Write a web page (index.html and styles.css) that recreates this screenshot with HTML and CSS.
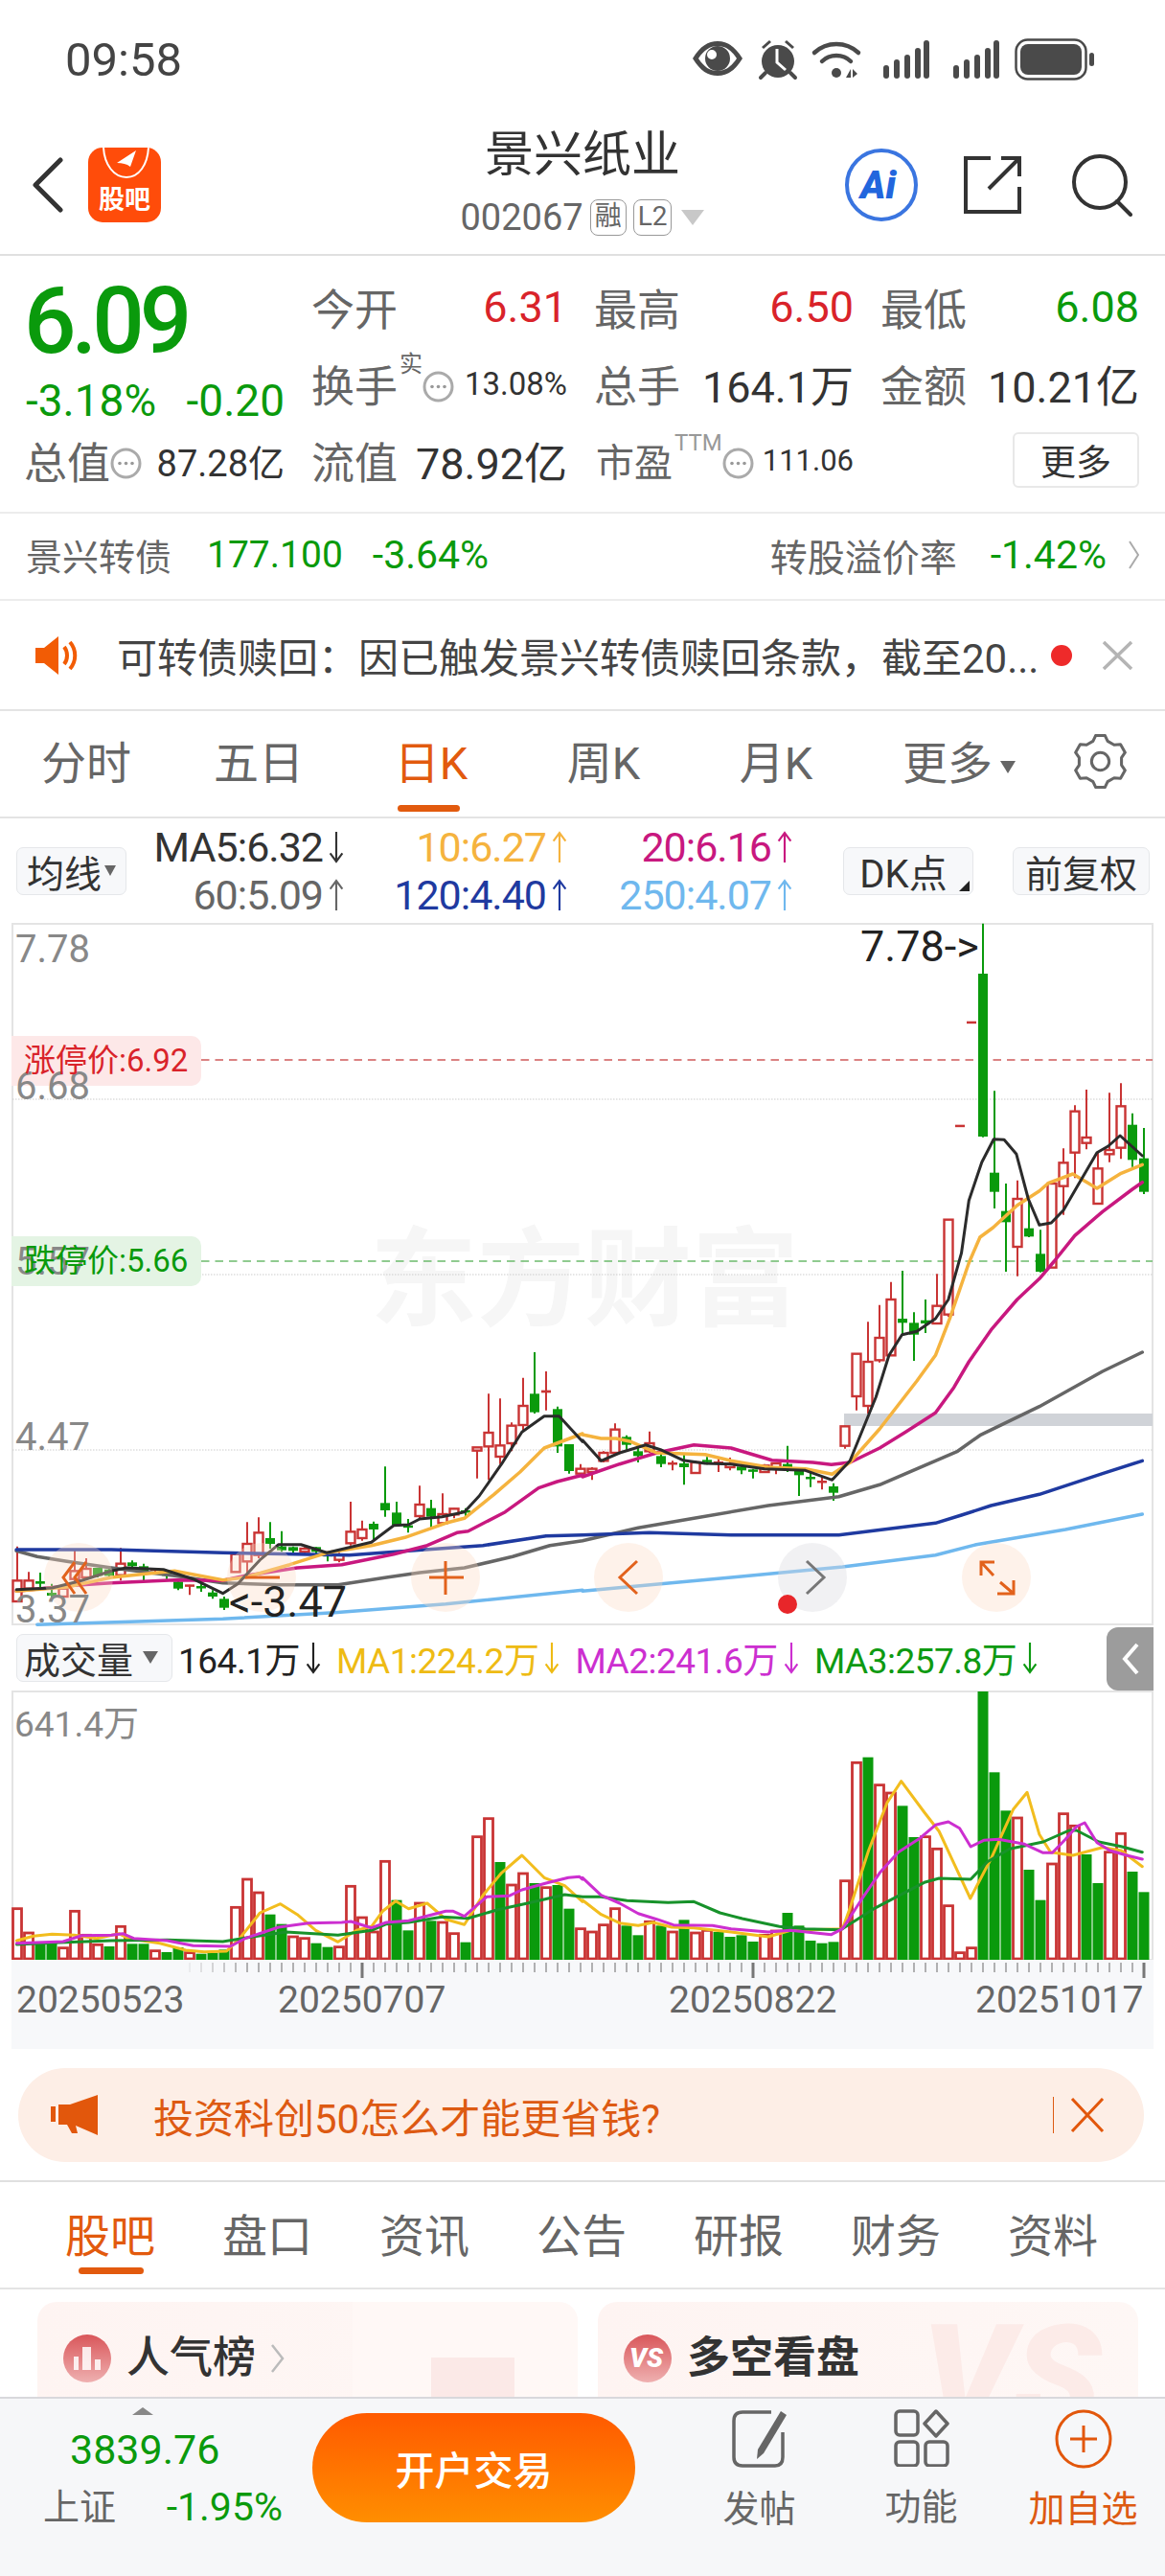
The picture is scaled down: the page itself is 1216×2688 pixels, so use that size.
FILE: index.html
```html
<!DOCTYPE html>
<html lang="zh-CN">
<head>
  <meta charset="UTF-8">
  <meta name="viewport" content="width=device-width, initial-scale=1.0">
  <title>景兴纸业</title>
  <link rel="stylesheet" href="styles.css">
</head>
<body>
  <svg class="defs" width="0" height="0">
    <symbol id="arrow-up" viewBox="0 0 16 32"><path d="M8 31V2M2 10L8 2L14 10" fill="none" stroke="currentColor" stroke-width="2"/></symbol>
    <symbol id="arrow-down" viewBox="0 0 16 32"><path d="M8 1V30M2 22L8 30L14 22" fill="none" stroke="currentColor" stroke-width="2"/></symbol>
    <symbol id="dots" viewBox="0 0 33 33"><circle cx="16.5" cy="16.5" r="14.5" fill="none" stroke="#aaa" stroke-width="3"/><circle cx="10" cy="16.5" r="1.8" fill="#999"/><circle cx="16.5" cy="16.5" r="1.8" fill="#999"/><circle cx="23" cy="16.5" r="1.8" fill="#999"/></symbol>
  </svg>
  <div class="page">
    <div class="status">
      <span class="time">09:58</span>
      <svg class="status-icons" width="420" height="44" viewBox="0 0 420 44">
        <g fill="#4a4a4a">
          <path fill-rule="evenodd" d="M0 21C8 8 16 3 26 3S44 8 52 21C44 34 36 39 26 39S8 34 0 21ZM6 21C12 30 18 34 26 34S40 30 46 21C40 12 34 8 26 8S12 12 6 21Z"/>
          <path fill-rule="evenodd" d="M26 8A13 13 0 1 1 26 34A13 13 0 1 1 26 8ZM20 12A5 5 0 1 0 20 22A5 5 0 1 0 20 12Z"/>
          <circle cx="89" cy="24" r="17"/>
          <path d="M72 9L80 2L82 4L74 11ZM106 9L98 2L96 4L104 11Z"/>
          <path d="M76 36L71 41M102 36L107 41" stroke="#4a4a4a" stroke-width="4" stroke-linecap="round"/>
          <path d="M88 11V25L97 33" fill="none" stroke="#fff" stroke-width="3"/>
          <path d="M127 15C140 3 160 3 173 15" fill="none" stroke="#4a4a4a" stroke-width="4.5" stroke-linecap="round"/>
          <path d="M135 24C143 16 157 16 165 24" fill="none" stroke="#4a4a4a" stroke-width="4.5" stroke-linecap="round"/>
          <circle cx="150" cy="36" r="5"/>
          <path d="M160 41L165 32V41ZM167 32L172 37L167 41Z"/>
          <rect x="199" y="28" width="6" height="14" rx="3"/><rect x="210" y="22" width="6" height="20" rx="3"/><rect x="221" y="17" width="6" height="25" rx="3"/><rect x="232" y="10" width="6" height="32" rx="3"/><rect x="241" y="2" width="6" height="40" rx="3"/>
          <rect x="272" y="28" width="6" height="14" rx="3"/><rect x="283" y="22" width="6" height="20" rx="3"/><rect x="294" y="17" width="6" height="25" rx="3"/><rect x="305" y="10" width="6" height="32" rx="3"/><rect x="314" y="2" width="6" height="40" rx="3"/>
          <rect x="337.500" y="1.500" width="73" height="41" rx="12" fill="none" stroke="#4a4a4a" stroke-width="2.500"/>
          <rect x="342" y="6" width="64" height="32" rx="8"/>
          <rect x="414" y="15" width="5" height="14" rx="2.500"/>
        </g>
      </svg>
    </div>

    <div class="nav">
      <div class="nav-left">
        <svg width="36" height="58" viewBox="0 0 36 58"><path d="M31 3L5 29L31 55" fill="none" stroke="#333" stroke-width="5" stroke-linecap="round" stroke-linejoin="round"/></svg>
        <div class="logo">
          <svg class="logo-mark" width="76" height="34" viewBox="0 0 76 34"><path d="M16 0C17 18 27 31 40 31S62 18 63 0" fill="none" stroke="#fff" stroke-width="2"/><path d="M30 16L50 3L44 20C40 17 36 16 30 16Z" fill="#fff"/></svg>
          <span>股吧</span>
        </div>
      </div>
      <div class="nav-center">
        <div class="stock-name">景兴纸业</div>
        <div class="stock-code">
          <span>002067</span><i class="badge">融</i><i class="badge">L2</i><b class="code-caret"></b>
        </div>
      </div>
      <div class="nav-right">
        <svg width="78" height="78" viewBox="0 0 78 78"><circle cx="39" cy="39" r="36" fill="none" stroke="#3a75e0" stroke-width="4"/><text x="17" y="53" class="ai-text">Ai</text></svg>
        <svg class="share-icon" width="62" height="62" viewBox="0 0 62 62"><path d="M29 3H3V59H59V33M27 35L58 4M40 3H59V22" fill="none" stroke="#333" stroke-width="4"/></svg>
        <svg width="64" height="66" viewBox="0 0 64 66"><circle cx="30" cy="30" r="27" fill="none" stroke="#333" stroke-width="4"/><path d="M48 50L62 64" stroke="#333" stroke-width="4" stroke-linecap="round"/></svg>
      </div>
    </div>

    <div class="quote">
      <div class="price-box">
        <div class="price">6.09</div>
        <div class="change"><span>-3.18%</span><span>-0.20</span></div>
      </div>
      <div class="cell"><span class="label">今开</span><span class="num red">6.31</span></div>
      <div class="cell"><span class="label">最高</span><span class="num red">6.50</span></div>
      <div class="cell"><span class="label">最低</span><span class="num green">6.08</span></div>
      <div class="cell">
        <span class="label">换手</span><sup class="sup">实</sup><svg class="dot-icon" width="33" height="33"><use href="#dots"/></svg>
        <span class="num small end">13.08%</span>
      </div>
      <div class="cell"><span class="label">总手</span><span class="num">164.1万</span></div>
      <div class="cell"><span class="label">金额</span><span class="num">10.21亿</span></div>
      <div class="cell first-col">
        <span class="label">总值</span><svg class="dot-icon" width="33" height="33"><use href="#dots"/></svg>
        <span class="num mid end">87.28亿</span>
      </div>
      <div class="cell"><span class="label">流值</span><span class="num">78.92亿</span></div>
      <div class="cell">
        <span class="label short">市盈</span><sup class="sup ttm">TTM</sup><svg class="dot-icon" width="33" height="33"><use href="#dots"/></svg>
        <span class="num tiny end">111.06</span>
      </div>
      <div class="cell end-only"><button class="more-btn">更多</button></div>
    </div>

    <div class="bond">
      <span class="bond-label">景兴转债</span>
      <span class="bond-num first">177.100</span>
      <span class="bond-num second">-3.64%</span>
      <span class="bond-label push">转股溢价率</span>
      <span class="bond-num third">-1.42%</span>
      <svg width="11" height="30" viewBox="0 0 11 30"><path d="M1 1L10 15L1 29" fill="none" stroke="#aaa" stroke-width="2"/></svg>
    </div>

    <div class="notice">
      <svg width="48" height="40" viewBox="0 0 48 40"><path d="M0 12H9L24 0V40L9 28H0Z" fill="#f25c05"/><path d="M30 11C34 16 34 24 30 29M36 6C43 14 43 26 36 34" fill="none" stroke="#f25c05" stroke-width="4"/></svg>
      <span class="notice-text">可转债赎回：因已触发景兴转债赎回条款，截至20...</span>
      <i class="red-dot"></i>
      <svg width="33" height="30" viewBox="0 0 33 30"><path d="M2 1L31 29M31 1L2 29" stroke="#b4b4b4" stroke-width="3.500"/></svg>
    </div>

    <div class="period-tabs">
      <div class="period-list">
        <span>分时</span><span>五日</span><span class="active">日K</span><span>周K</span><span>月K</span>
        <span class="period-more">更多<b class="more-caret"></b></span>
      </div>
      <svg class="gear" width="57" height="57" viewBox="0 0 56 56"><path d="M20.500 7.300L23.300 1.400H32.700L35.500 7.300L42.100 11.100L48.700 10.600L53.400 18.800L49.700 24.200V31.800L53.400 37.200L48.700 45.400L42.100 44.900L35.500 48.700L32.700 54.600H23.300L20.500 48.700L13.900 44.900L7.300 45.400L2.600 37.200L6.300 31.800V24.200L2.600 18.800L7.300 10.600L13.900 11.100Z" fill="none" stroke="#666" stroke-width="3" stroke-linejoin="round"/><circle cx="28" cy="28" r="9" fill="none" stroke="#666" stroke-width="3"/></svg>
    </div>

    <div class="ma-row">
      <button class="tool-btn ma-btn">均线<b class="btn-caret"></b></button>
      <div class="ma-grid">
        <span class="c-black">MA5:6.32<svg class="arr"><use href="#arrow-down"/></svg></span>
        <span class="c-orange">10:6.27<svg class="arr"><use href="#arrow-up"/></svg></span>
        <span class="c-pink">20:6.16<svg class="arr"><use href="#arrow-up"/></svg></span>
        <span class="c-gray">60:5.09<svg class="arr"><use href="#arrow-up"/></svg></span>
        <span class="c-navy">120:4.40<svg class="arr"><use href="#arrow-up"/></svg></span>
        <span class="c-sky">250:4.07<svg class="arr"><use href="#arrow-up"/></svg></span>
      </div>
      <button class="tool-btn dk-btn">DK点<b class="corner"></b></button>
      <button class="tool-btn fq-btn">前复权</button>
    </div>

    <svg id="kline" class="chart" width="1216" height="732" viewBox="0 962 1216 732">
      <text x="386" y="1374" class="watermark">东方财富</text>
      <rect x="13" y="963" width="1190" height="731" fill="none" stroke="#e4e4e4" stroke-width="2"/>
      <path d="M13 1146H1203M13 1329H1203M13 1512H1203" stroke="#ccc" stroke-width="1" stroke-dasharray="1.500 1.500"/>
      <rect x="881" y="1474" width="322" height="13" fill="#d0d3d8"/>
      <path d="M210 1105H1203" stroke="#d05a5a" stroke-width="1.500" stroke-dasharray="8.500 6"/>
      <path d="M210 1315H1203" stroke="#6cbb6c" stroke-width="1.500" stroke-dasharray="8.500 6"/>
      <g id="kline-data"></g>
      <g class="ovals">
        <circle cx="82" cy="1645" r="36"/><circle cx="273" cy="1645" r="36"/><circle cx="465" cy="1645" r="36"/><circle cx="656" cy="1645" r="36"/><circle cx="1040" cy="1645" r="36"/>
        <circle cx="848" cy="1645" r="36" class="oval-gray"/>
      </g>
      <g class="pad-icons">
        <path d="M78 1629L66 1645L78 1662M90 1629L78 1645L90 1662"/>
        <path d="M256 1645H292"/>
        <path d="M448 1645H484M465 1628V1663"/>
        <path d="M665 1628L647 1645L665 1662"/>
        <path d="M842 1628L860 1645L842 1662" class="pad-gray"/>
        <path d="M1038 1629H1024V1643M1024 1629L1037 1643M1041 1662H1058V1648M1058 1662L1044 1650"/>
      </g>
      <circle cx="822" cy="1673" r="10" fill="#e8262a"/>
      <path d="M12 1080H200a10 10 0 0 1 10 10V1122a10 10 0 0 1 -10 10H12Z" fill="#fde8e8"/>
      <path d="M12 1289H200a10 10 0 0 1 10 10V1331a10 10 0 0 1 -10 10H12Z" fill="#e4f4e4"/>
      <text x="16" y="1003" class="axis-text">7.78</text>
      <text x="16" y="1146" class="axis-text">6.68</text>
      <text x="16" y="1329" class="axis-text">5.57</text>
      <text x="16" y="1512" class="axis-text">4.47</text>
      <text x="16" y="1692" class="axis-text">3.37</text>
      <text x="25" y="1117" class="limit-up">涨停价:6.92</text>
      <text x="25" y="1326" class="limit-down">跌停价:5.66</text>
      <text x="898" y="1002" class="extreme">7.78-&gt;</text>
      <text x="239" y="1686" class="extreme">&lt;-3.47</text>
    </svg>

    <div class="vol-head">
      <button class="tool-btn vol-btn">成交量<b class="btn-caret big"></b></button>
      <span class="vol-item c-dark">164.1万<svg class="arr"><use href="#arrow-down"/></svg></span>
      <span class="vol-item c-ma1">MA1:224.2万<svg class="arr"><use href="#arrow-down"/></svg></span>
      <span class="vol-item c-ma2">MA2:241.6万<svg class="arr"><use href="#arrow-down"/></svg></span>
      <span class="vol-item c-ma3">MA3:257.8万<svg class="arr"><use href="#arrow-down"/></svg></span>
      <span class="collapse"><svg width="18" height="34" viewBox="0 0 18 34"><path d="M16 2L3 17L16 32" fill="none" stroke="#fff" stroke-width="4"/></svg></span>
    </div>

    <svg id="volume" class="chart" width="1216" height="281" viewBox="0 1763 1216 281">
      <rect x="13" y="1764" width="1190" height="280" fill="none" stroke="#e4e4e4" stroke-width="2"/>
      <g id="volume-data"></g>
      <text x="15" y="1811" class="axis-text vol-max">641.4万</text>
    </svg>

    <div class="axis">
      <svg id="ticks" class="ticks" width="1216" height="20" viewBox="0 2044 1216 20"></svg>
      <div class="dates"><span>20250523</span><span>20250707</span><span>20250822</span><span>20251017</span></div>
    </div>

    <div class="promo">
      <svg width="49" height="42" viewBox="0 0 49 42"><path d="M0 12H5V28H0ZM8 10H20L49 0V42L26 32L28 40L22 40L17 31H8Z" fill="#e2570c"/></svg>
      <span class="promo-text">投资科创50怎么才能更省钱?</span>
      <i class="promo-sep"></i>
      <svg width="36" height="36" viewBox="0 0 36 36"><path d="M2 1L34 35M34 1L2 35" stroke="#e2570c" stroke-width="3"/></svg>
    </div>

    <div class="sub-tabs">
      <span class="active">股吧</span><span>盘口</span><span>资讯</span><span>公告</span><span>研报</span><span>财务</span><span>资料</span>
    </div>

    <div class="cards">
      <div class="card">
        <i class="card-block outer"></i><i class="card-block inner"></i>
        <svg class="card-badge" width="50" height="52" viewBox="0 0 50 52"><circle cx="25" cy="26" r="25" fill="url(#badge-fill)"/><path d="M11 38V24H16V38ZM20 38V14H29V38ZM33 38V27H39V38Z" fill="#fff" opacity=".85"/><defs><linearGradient id="badge-fill" x1="0" y1="0" x2="0" y2="1"><stop offset="0" stop-color="#d9565a"/><stop offset="1" stop-color="#efb0b0"/></linearGradient></defs></svg>
        <span class="card-title">人气榜</span>
        <svg class="card-chev" width="15" height="30" viewBox="0 0 15 30"><path d="M2 1L13 15L2 29" fill="none" stroke="#bbb" stroke-width="2.500"/></svg>
      </div>
      <div class="card">
        <span class="card-vs">VS</span>
        <svg class="card-badge" width="50" height="52" viewBox="0 0 50 52"><circle cx="25" cy="26" r="25" fill="url(#badge-fill)"/><text x="6" y="35" class="vs-text">VS</text></svg>
        <span class="card-title strong">多空看盘</span>
      </div>
    </div>

    <div class="bottom-bar">
      <div class="index-box">
        <b class="index-caret"></b>
        <div class="index-value">3839.76</div>
        <div class="index-row"><span class="index-name">上证</span><span class="index-change">-1.95%</span></div>
      </div>
      <button class="trade-btn">开户交易</button>
      <div class="actions">
        <div class="action">
          <svg width="60" height="62" viewBox="0 0 60 62"><path d="M42 3H12Q3 3 3 12V50Q3 59 12 59H46Q54 59 54 50V24" fill="none" stroke="#666" stroke-width="3.500"/><path d="M52 2L58 6L34 46L27 52L28 42Z" fill="#666"/></svg>
          <span>发帖</span>
        </div>
        <div class="action">
          <svg width="58" height="60" viewBox="0 0 58 60"><g fill="none" stroke="#666" stroke-width="3.500"><rect x="2" y="2" width="23" height="25" rx="4"/><rect x="2" y="34" width="23" height="25" rx="4"/><rect x="33" y="34" width="23" height="25" rx="4"/><path d="M44 2L56 15L44 28L32 15Z" stroke-linejoin="round"/></g></svg>
          <span>功能</span>
        </div>
        <div class="action orange">
          <svg width="60" height="62" viewBox="0 0 60 62"><ellipse cx="30" cy="31" rx="28" ry="29" fill="none" stroke="#e2570c" stroke-width="3"/><path d="M16 31H44M30 17V45" stroke="#e2570c" stroke-width="3"/></svg>
          <span>加自选</span>
        </div>
      </div>
    </div>
  </div>
  <script src="chart.js"></script>
</body>
</html>
```
FILE: styles.css
```css
* {
  box-sizing: border-box;
}
body {
  margin: 0;
  background: #fff;
  font-family: Roboto, "Noto Sans CJK SC", sans-serif;
  color: #333;
}
i, b {
  font-style: normal;
  font-weight: normal;
}
button {
  font-family: inherit;
  padding: 0;
}
svg {
  display: block;
  flex-shrink: 0;
}
.defs {
  position: absolute;
}
.page {
  width: 1216px;
  height: 2688px;
  display: flex;
  flex-direction: column;
  overflow: hidden;
}

/* status bar */
.status {
  height: 115px;
  flex-shrink: 0;
  display: flex;
  align-items: center;
  justify-content: space-between;
  padding: 9px 73px 0 68px;
}
.time {
  font-size: 49px;
  color: #444;
}

/* title bar */
.nav {
  height: 152px;
  flex-shrink: 0;
  display: grid;
  grid-template-columns: 1fr auto 1fr;
  align-items: center;
  border-bottom: 2px solid #e0e0e0;
  padding-top: 6px;
}
.nav-left {
  display: flex;
  align-items: center;
  padding-left: 32px;
  gap: 24px;
}
.logo {
  width: 76px;
  height: 78px;
  border-radius: 15px;
  background: #ff4c0a;
  position: relative;
  overflow: hidden;
  color: #fff;
  font-size: 27px;
  font-weight: 700;
  text-align: center;
  padding-top: 37px;
  line-height: 36px;
}
.logo-mark {
  position: absolute;
  left: 0;
  top: 0;
}
.nav-center {
  display: flex;
  flex-direction: column;
  align-items: center;
}
.stock-name {
  font-size: 51px;
  line-height: 62px;
  margin-top: -8px;
}
.stock-code {
  display: flex;
  align-items: center;
  font-size: 38px;
  line-height: 40px;
  color: #666;
  margin-top: 14px;
  gap: 7px;
}
.badge {
  border: 1.5px solid #999;
  border-radius: 8px;
  height: 38px;
  padding: 0 4px;
  font-size: 28px;
  line-height: 34px;
  color: #666;
}
.code-caret {
  width: 0;
  height: 0;
  border-left: 12px solid transparent;
  border-right: 12px solid transparent;
  border-top: 16px solid #c8c8c8;
  margin-left: 3px;
}
.nav-right {
  display: flex;
  align-items: center;
  justify-content: flex-end;
  padding-right: 34px;
  gap: 46px;
}
.share-icon {
  margin-right: 5px;
}
.ai-text {
  font-size: 40px;
  font-weight: 900;
  font-style: italic;
  fill: #2266dd;
}

/* quote block */
.quote {
  height: 269px;
  flex-shrink: 0;
  display: grid;
  grid-template-columns: 270px 265px 269px 268px;
  grid-template-rows: 80px 80px 80px;
  column-gap: 30px;
  padding: 13px 27px 0;
  border-bottom: 2px solid #ececec;
}
.price-box {
  grid-row: 1 / 3;
}
.price {
  font-size: 96px;
  font-weight: 500;
  line-height: 92px;
  color: #0a9a0c;
  letter-spacing: -5px;
  margin-top: 9px;
  margin-left: -2px;
}
.change {
  display: flex;
  justify-content: space-between;
  font-size: 46px;
  line-height: 50px;
  color: #0a9a0c;
  margin-top: 12px;
}
.cell {
  display: flex;
  align-items: center;
  justify-content: space-between;
}
.cell.first-col {
  grid-column: 1;
}
.cell.end-only {
  justify-content: flex-end;
}
.label {
  font-size: 45px;
  color: #666;
  white-space: nowrap;
  margin-left: -2px;
}
.label.short {
  font-size: 40px;
  margin-left: 0;
}
.num {
  font-size: 45px;
  white-space: nowrap;
}
.num.red {
  color: #d9232a;
}
.num.green {
  color: #0a9a0c;
}
.num.small {
  font-size: 33px;
}
.num.mid {
  font-size: 38px;
}
.num.tiny {
  font-size: 31px;
}
.num.end {
  margin-left: auto;
}
.sup {
  font-size: 24px;
  color: #666;
  align-self: flex-start;
  margin: 8px 0 0 2px;
  line-height: 24px;
}
.sup.ttm {
  color: #999;
  margin-top: 10px;
}
.dot-icon {
  margin-top: 6px;
}
.more-btn {
  width: 132px;
  height: 58px;
  background: #fff;
  border: 2px solid #e8e8e8;
  border-radius: 6px;
  font-size: 37px;
  color: #333;
}

/* bond row */
.bond {
  height: 91px;
  flex-shrink: 0;
  display: flex;
  align-items: center;
  padding: 0 27px 4px;
  border-bottom: 2px solid #ececec;
}
.bond-label {
  font-size: 38px;
  color: #666;
}
.bond-label.push {
  font-size: 39px;
  margin-left: auto;
}
.bond-num {
  font-size: 39px;
  color: #0a9a0c;
}
.bond-num.first {
  margin-left: 37px;
}
.bond-num.second {
  font-size: 41px;
  margin-left: 31px;
}
.bond-num.third {
  font-size: 41px;
  margin: 0 23px 0 35px;
}

/* notice row */
.notice {
  height: 115px;
  flex-shrink: 0;
  display: flex;
  align-items: center;
  padding: 0 33px 0 37px;
  border-bottom: 2px solid #e4e4e4;
}
.notice-text {
  font-size: 42px;
  color: #444;
  margin-left: 37px;
  white-space: nowrap;
  width: 975px;
}
.red-dot {
  width: 22px;
  height: 22px;
  border-radius: 50%;
  background: #ee2a2a;
  margin-right: 31px;
}

/* period tabs */
.period-tabs {
  height: 112px;
  flex-shrink: 0;
  display: flex;
  align-items: center;
  border-bottom: 2px solid #e4e4e4;
}
.period-list {
  display: grid;
  grid-template-columns: repeat(6, 180px);
  justify-items: center;
  font-size: 47px;
  color: #666;
}
.period-list span {
  position: relative;
  line-height: 60px;
}
.period-list .period-more {
  margin-left: 22px;
}
.period-list .active {
  color: #e25a0e;
}
.period-list .active::after {
  content: "";
  position: absolute;
  left: 3px;
  right: 8px;
  bottom: -20px;
  height: 7px;
  border-radius: 4px;
  background: #e25a0e;
}
.more-caret {
  display: inline-block;
  border-left: 8px solid transparent;
  border-right: 8px solid transparent;
  border-top: 13px solid #666;
  margin-left: 8px;
  vertical-align: middle;
}
.gear {
  margin-left: 40px;
  margin-top: -6px;
}

/* indicator row */
.ma-row {
  height: 109px;
  flex-shrink: 0;
  display: flex;
  align-items: center;
  padding-left: 17px;
}
.tool-btn {
  height: 50px;
  background: #f7f8fa;
  border: 1.5px solid #e5e7ea;
  border-radius: 7px;
  font-size: 39px;
  color: #333;
  display: flex;
  align-items: center;
  justify-content: center;
  position: relative;
}
.ma-btn {
  width: 115px;
}
.btn-caret {
  border-left: 6px solid transparent;
  border-right: 6px solid transparent;
  border-top: 11px solid #666;
  margin-left: 3px;
}
.btn-caret.big {
  border-left-width: 8px;
  border-right-width: 8px;
  border-top-width: 13px;
  margin-left: 10px;
}
.ma-grid {
  display: grid;
  grid-template-columns: 197px 233px 235px;
  grid-auto-rows: 50px;
  margin-left: 31px;
  font-size: 43px;
  line-height: 50px;
}
.ma-grid span {
  display: flex;
  align-items: center;
  justify-content: flex-end;
  letter-spacing: -1px;
}
.arr {
  width: 18px;
  height: 34px;
  margin-left: 5px;
}
.dk-btn {
  width: 136px;
  margin-left: 52px;
  padding-right: 10px;
  font-size: 40px;
}
.fq-btn {
  width: 143px;
  margin-left: 41px;
}
.corner {
  position: absolute;
  right: 3px;
  bottom: 3px;
  border-left: 11px solid transparent;
  border-bottom: 11px solid #222;
}
.c-black { color: #333; }
.c-orange { color: #f5b33e; }
.c-pink { color: #c8187f; }
.c-gray { color: #666; }
.c-navy { color: #1f3aa0; }
.c-sky { color: #6fb8ee; }

/* chart text */
.chart {
  flex-shrink: 0;
  overflow: visible;
}
.watermark {
  font-size: 112px;
  font-weight: 700;
  fill: #f6f6f6;
}
.axis-text {
  font-size: 40px;
  fill: #888;
}
.vol-max {
  font-size: 37px;
}
.limit-up {
  font-size: 33px;
  fill: #d9232a;
}
.limit-down {
  font-size: 33px;
  fill: #0a9a0c;
}
.extreme {
  font-size: 45px;
  fill: #222;
}
.ovals circle {
  fill: #fbd9c4;
  opacity: .35;
}
.ovals .oval-gray {
  fill: #dcdde0;
  opacity: .4;
}
.pad-icons path {
  fill: none;
  stroke: #e2621c;
  stroke-width: 3;
}
.pad-icons .pad-gray {
  stroke: #777;
}

/* volume header */
.vol-head {
  height: 69px;
  flex-shrink: 0;
  display: flex;
  align-items: center;
  padding-left: 17px;
  position: relative;
}
.vol-btn {
  width: 163px;
  justify-content: flex-start;
  padding-left: 7px;
  font-size: 38px;
}
.vol-item {
  display: flex;
  align-items: center;
  font-size: 37px;
  letter-spacing: -.5px;
  margin-left: 15px;
  white-space: nowrap;
}
.vol-item.c-dark {
  margin-left: 6px;
}
.c-dark { color: #222; }
.c-ma1 { color: #eebb14; }
.c-ma2 { color: #cc2fd0; }
.c-ma3 { color: #0e9a12; }
.collapse {
  position: absolute;
  left: 1155px;
  top: 3px;
  width: 49px;
  height: 66px;
  background: #9c9c9c;
  border-radius: 12px 0 0 12px;
  display: flex;
  align-items: center;
  justify-content: center;
}

/* time axis */
.axis {
  width: 1192px;
  height: 93px;
  flex-shrink: 0;
  margin-left: 12px;
  background: #f7f8fa;
}
.ticks {
  margin-left: -12px;
}
.dates {
  display: grid;
  grid-template-columns: 273px 408px 320px auto;
  padding-left: 5px;
  font-size: 39px;
  line-height: 40px;
  color: #666;
  margin-top: 2px;
}

/* promo banner */
.promo {
  height: 98px;
  flex-shrink: 0;
  margin: 20px 22px 19px 19px;
  background: #fdeee6;
  border-radius: 49px;
  display: flex;
  align-items: center;
  padding: 0 41px 0 34px;
}
.promo-text {
  font-size: 42px;
  color: #dd5a12;
  margin-left: 58px;
  white-space: nowrap;
}
.promo-sep {
  width: 1px;
  height: 38px;
  background: #dd5a12;
  margin: 0 17px 0 auto;
}

/* content tabs */
.sub-tabs {
  height: 114px;
  flex-shrink: 0;
  display: grid;
  grid-template-columns: repeat(7, 164px);
  justify-items: center;
  align-items: center;
  padding: 0 0 6px 33px;
  border-top: 2px solid #e0e0e0;
  border-bottom: 2px solid #e4e4e4;
  font-size: 47px;
  color: #666;
}
.sub-tabs span {
  position: relative;
}
.sub-tabs .active {
  color: #e25a0e;
}
.sub-tabs .active::after {
  content: "";
  position: absolute;
  left: 14px;
  right: 12px;
  bottom: -9px;
  height: 7px;
  border-radius: 4px;
  background: #e25a0e;
}

/* cards */
.cards {
  flex: 1;
  min-height: 0;
  overflow: hidden;
  display: grid;
  grid-template-columns: 564px 564px;
  column-gap: 21px;
  padding: 13px 0 0 39px;
}
.card {
  height: 140px;
  position: relative;
  overflow: hidden;
  border-radius: 20px;
  background: linear-gradient(90deg, #fef4f2, #fef7f5);
  display: flex;
  align-items: flex-start;
  padding: 33px 0 0 27px;
}
.card-badge {
  position: relative;
}
.card-title {
  position: relative;
  font-size: 45px;
  line-height: 52px;
  font-weight: 500;
  margin-left: 16px;
  color: #333;
}
.card-title.strong {
  font-weight: 700;
}
.card-chev {
  position: relative;
  margin: 11px 0 0 15px;
}
.card-block {
  position: absolute;
}
.card-block.outer {
  left: 329px;
  top: 0;
  right: 0;
  bottom: 0;
  background: #fff8f6;
}
.card-block.inner {
  left: 411px;
  top: 58px;
  width: 87px;
  bottom: 0;
  background: #fbe9e7;
}
.card-vs {
  position: absolute;
  left: 338px;
  top: 29px;
  font-size: 150px;
  line-height: 100px;
  font-weight: 900;
  font-style: italic;
  color: #fcebe8;
}
.vs-text {
  font-size: 28px;
  font-weight: 900;
  font-style: italic;
  fill: #fff;
}

/* bottom bar */
.bottom-bar {
  height: 187px;
  flex-shrink: 0;
  position: relative;
  display: flex;
  align-items: flex-start;
  background: #f6f7f9;
  border-top: 2px solid #d8d8dc;
}
.index-box {
  width: 250px;
  margin-left: 45px;
  padding-top: 9px;
  display: flex;
  flex-direction: column;
  align-items: flex-start;
}
.index-caret {
  border-left: 11px solid transparent;
  border-right: 11px solid transparent;
  border-bottom: 8px solid #888;
  margin-left: 93px;
}
.index-value {
  font-size: 43px;
  line-height: 50px;
  color: #0a9a0c;
  margin: 11px 0 0 28px;
}
.index-row {
  width: 100%;
  display: flex;
  justify-content: space-between;
  align-items: center;
  margin-top: 12px;
  line-height: 46px;
}
.index-name {
  font-size: 38px;
  color: #666;
}
.index-change {
  font-size: 41px;
  color: #0a9a0c;
}
.trade-btn {
  width: 337px;
  height: 114px;
  margin: 15px 0 0 31px;
  border: none;
  border-radius: 57px;
  background: linear-gradient(180deg, #ff5a00, #ff8e00);
  color: #fff;
  font-size: 41px;
  font-weight: 500;
}
.actions {
  display: grid;
  grid-template-columns: repeat(3, 169px);
  margin-left: 45px;
  padding-top: 11px;
}
.action {
  display: flex;
  flex-direction: column;
  align-items: center;
  font-size: 38px;
  line-height: 46px;
  color: #666;
}
.action span {
  margin-top: 19px;
  white-space: nowrap;
}
.action.orange {
  color: #dd5a12;
}
```
FILE: chart.js
```js
const NS = 'http://www.w3.org/2000/svg';
const RED = '#c93434';
const GREEN = '#0a9a0c';
const STEP_X = 12;
const X0 = 18;

function add(parent, tag, attrs) {
  const el = document.createElementNS(NS, tag);
  for (const k in attrs) el.setAttribute(k, attrs[k]);
  parent.appendChild(el);
  return el;
}

const xAt = i => X0 + STEP_X * i;

// candles: [high, top, bottom, low, colour], heights are thirds of a pixel from base
const candleBlocks = [
  { start: 0, base: 1380, rows: [
    [698,805,870,870,'r'],[778,805,830,835,'r'],[780,810,818,825,'g'],[815,843,852,860,'g'],[825,830,855,860,'r'],
    [710,775,800,815,'r'],[735,768,795,800,'r'],[765,765,790,795,'g'],[765,770,790,800,'g'],[703,752,788,805,'r'],
    [742,748,760,770,'g'],[752,760,775,805,'g'],[768,770,775,785,'r'],[775,780,790,800,'g'],[800,808,830,835,'g'],
    [818,820,826,850,'r'],[815,825,830,840,'g'],[835,842,855,862,'g'],[855,862,890,897,'g'],[722,722,778,778,'r'],
    [622,690,745,780,'r'],[607,655,725,735,'r'],[622,672,690,705,'g'],[650,698,710,715,'g'],[698,700,712,725,'g'],
    [700,705,715,720,'r'],[700,700,715,725,'g'],[720,725,732,745,'g'],[718,725,740,748,'r'],[558,652,688,695,'r'],
    [617,645,672,680,'r'],[620,627,645,675,'g'],[448,562,585,605,'g'],[558,592,630,635,'g'],[612,635,642,655,'g'],
    [508,567,603,610,'r'],[552,578,605,640,'g'],[532,597,625,630,'r'],[578,580,598,610,'r'],[578,588,595,605,'g'],
    [388,388,398,485,'r'],[220,342,385,490,'r'],[235,382,417,440,'r'],[310,320,375,400,'r'],[170,258,318,335,'r'],
    [90,220,278,282,'g'],[150,212,220,272,'r'],[260,268,385,405,'g'],[378,378,462,470,'g'] ] },
  { start: 49, base: 1240, rows: [
    [860,875,890,900,'r'],[870,875,885,910,'r'],[820,825,850,855,'r'],[733,752,825,830,'r'],[770,775,800,815,'g'],
    [810,820,835,855,'g'],[758,795,820,825,'r'],[815,835,860,870,'g'],[850,858,865,880,'r'],[830,858,870,925,'g'],
    [850,855,888,890,'r'],[838,850,853,862,'g'],[840,855,860,885,'r'],[840,860,870,880,'r'],[860,868,880,892,'g'],
    [875,880,886,905,'g'],[860,865,885,885,'r'],[855,858,872,892,'r'],[803,860,870,885,'g'],[870,882,895,960,'g'],
    [885,903,910,932,'g'],[900,915,922,940,'r'],[920,930,950,975,'g'],[740,742,803,812,'r'],[513,515,648,692,'r'],
    [415,540,678,702,'r'],[362,465,535,542,'r'],[290,345,520,520,'r'],[255,405,418,455,'g'],[385,418,455,537,'g'],
    [345,410,420,450,'g'],[265,365,420,420,'r'],[93,95,392,400,'r'] ] },
  { start: 82, base: 940, rows: [
    [701,701,701,701,'r'],[377,377,377,377,'r'],[68,225,735,737,'g'],[592,848,908,960,'g'],[882,968,1003,1158,'g'],
    [872,930,1080,1172,'r'],[935,1022,1048,1050,'g'],[1027,1102,1158,1160,'g'],[880,882,1145,1145,'r'],[772,817,890,980,'r'],
    [637,656,785,865,'r'],[588,738,755,775,'r'],[780,835,945,945,'r'],[598,777,790,815,'r'],[568,640,770,805,'r'],
    [662,698,808,830,'g'],[708,803,908,915,'g'] ] }
];

// line knots, each part is measured from its own origin at 2.579 / 3 units per pixel
const LEFT = [0, 1380], MID = [608, 1240], TOP = [608, 940], VOL_L = [0, 1740], VOL_R = [608, 1740];

const klineLines = [
  { color: '#6fb8ee', width: 3.5, parts: [
    [LEFT, [100,943,600,925,900,905,1200,878,1568,835]],
    [MID, [0,1258,400,1215,700,1182,950,1145,1060,1112,1300,1065,1507,1017]] ] },
  { color: '#666', width: 3.5, parts: [
    [LEFT, [44,712,100,730,180,745,300,765,470,790,600,812,750,818,910,818,1040,795,1130,780,1250,765,1380,730,1480,695,1568,680]],
    [MID, [0,1100,150,1060,300,1030,500,990,690,962,800,925,950,850,1010,820,1070,770,1230,680,1400,570,1507,510]] ] },
  { color: '#1f3aa0', width: 3.5, parts: [
    [LEFT, [44,708,300,708,600,718,940,725,1100,712,1300,695,1470,665,1568,662]],
    [MID, [0,1082,180,1075,400,1082,690,1082,950,1045,1020,1020,1100,990,1230,955,1400,890,1507,850]] ] },
  { color: '#c8187f', width: 3.5, parts: [
    [LEFT, [44,838,200,820,300,812,470,803,600,805,660,790,800,765,920,755,1060,722,1150,695,1230,655,1260,650,1360,590,1450,515,1500,495,1568,475]],
    [MID, [0,900,100,860,200,825,300,800,400,810,510,848,620,855,670,862,720,855,800,810,870,760,950,700,1000,620,1040,540,1100,440,1170,345,1230,280,1270,225,1325,145,1400,70,1480,0]],
    [TOP, [1507,878]] ] },
  { color: '#f5b33e', width: 3.5, parts: [
    [LEFT, [44,838,180,825,300,795,380,785,470,775,600,803,660,795,780,755,880,718,1000,695,1090,670,1200,625,1250,610,1330,535,1400,465,1465,390,1568,345]],
    [MID, [0,768,50,780,90,780,130,790,200,825,330,830,400,850,500,870,600,875,672,892,720,855,800,750,900,600,950,520,990,400,1040,230,1070,150,1105,120]],
    [TOP, [1170,950,1230,905,1255,880,1320,852,1385,897,1450,850,1507,823]] ] },
  { color: '#2b2b2b', width: 3, parts: [
    [LEFT, [44,833,140,828,220,805,300,775,340,765,440,770,520,800,600,845,640,815,700,740,750,692,810,692,880,718,1000,685,1060,632,1100,630,1130,612,1190,605,1250,590,1290,540,1350,440,1405,340,1465,290,1505,290,1568,370]],
    [MID, [0,785,50,850,100,825,170,800,210,815,270,848,330,858,400,860,490,875,600,880,672,910,720,850,790,650,825,520,860,455,900,445,950,405,985,345,1020,200,1040,35]],
    [TOP, [1075,815,1107,743,1135,745,1168,790,1200,930,1230,1012,1262,1005,1295,965,1330,895,1385,785,1415,765,1447,732,1507,795]] ] }
];

const volLines = [
  { color: '#f2bd1e', width: 3, parts: [
    [VOL_L, [45,852,90,838,140,832,200,835,260,845,320,830,345,845,430,860,500,882,550,887,610,885,645,845,700,765,755,737,800,770,850,820,910,856,960,820,1000,808,1030,760,1065,728,1100,752,1150,735,1200,785,1250,802,1300,710,1350,640,1405,585,1465,655,1520,680,1568,730]],
    [VOL_R, [0,725,50,770,100,797,150,805,190,795,240,810,300,812,400,825,500,840,560,820,700,815,720,750,770,570,820,420,858,353,920,450,960,510,1000,610,1044,720,1100,595,1160,440,1197,388,1230,520,1260,575,1320,585,1400,560,1450,570,1507,620]] ] },
  { color: '#17922a', width: 3, parts: [
    [VOL_L, [45,864,160,858,300,852,450,850,600,855,680,840,770,825,910,835,1000,820,1040,800,1100,795,1190,778,1260,782,1340,755,1420,735,1520,708,1568,715]],
    [VOL_R, [0,715,50,715,120,727,230,733,300,730,370,765,430,783,530,808,600,815,695,818,740,785,780,755,850,712,920,670,960,657,1045,660,1090,605,1150,565,1240,543,1310,507,1330,507,1390,543,1450,557,1507,575]] ] },
  { color: '#cc2fd0', width: 3, parts: [
    [VOL_L, [45,860,170,855,220,836,300,835,330,830,360,845,450,852,520,868,620,870,660,845,750,810,830,797,920,795,945,792,1000,812,1040,795,1100,790,1200,760,1220,760,1250,776,1280,745,1310,715,1370,712,1405,693,1470,672,1530,655,1560,652,1568,660]],
    [VOL_R, [0,655,50,710,100,735,150,767,200,785,245,803,350,805,400,815,500,825,560,820,670,833,700,815,750,725,800,640,850,575,910,530,950,490,985,480,1015,500,1045,558,1080,538,1120,535,1190,550,1240,577,1265,577,1300,535,1330,495,1352,483,1385,545,1420,570,1465,585,1507,597]] ] }
];

const volTops = [
  752,828,858,858,875,760,835,865,870,808,
  862,862,884,888,873,890,893,890,880,748,
  660,702,770,800,840,845,860,872,872,682,
  780,825,604,725,820,735,790,795,830,857,
  527,470,606,678,642,672,686,678,752,815,
  825,803,752,805,835,793,805,825,787,828,
  820,825,840,835,855,835,822,765,805,852,
  860,856,665,295,278,365,390,430,528,527,
  565,743,890,875,72,325,445,468,630,725,
  612,455,493,582,672,575,517,636,700
];
const volColors = 'rrggrrrrgr' + 'ggrggrgggr' + 'rrggrrggrr' + 'rrrggrgrrg' + 'rrgrrgrggr' +
  'rrrggrgrgr' + 'rggggrrggg' + 'ggrrgrrggr' + 'rrrrgggrgg' + 'rrrggrrgg';

function drawCandle(g, i, base, row) {
  const [high, top, bottom, low, kind] = row;
  const color = kind === 'r' ? RED : GREEN;
  const x = xAt(i);
  const y = z => base + z / 3;
  add(g, 'line', { x1: x, x2: x, y1: y(high), y2: y(low), stroke: color, 'stroke-width': 2 });
  const h = y(bottom) - y(top);
  if (h < 3) {
    add(g, 'rect', { x: x - 5, y: y(top) - 1, width: 10, height: Math.max(h, 2.5), fill: color });
  } else if (kind === 'r') {
    add(g, 'rect', { x: x - 4.5, y: y(top), width: 9, height: h, fill: '#fff', stroke: color, 'stroke-width': 2.4 });
  } else {
    add(g, 'rect', { x: x - 5, y: y(top), width: 10, height: h, fill: color });
  }
}

function drawLine(g, line) {
  const pts = [];
  line.parts.forEach(([origin, knots]) => {
    for (let k = 0; k < knots.length; k += 2) {
      pts.push((origin[0] + knots[k] / 2.579).toFixed(1) + ',' + (origin[1] + knots[k + 1] / 3).toFixed(1));
    }
  });
  add(g, 'polyline', {
    points: pts.join(' '), fill: 'none', stroke: line.color,
    'stroke-width': line.width, 'stroke-linejoin': 'round', 'stroke-linecap': 'round'
  });
}

const klineGroup = document.getElementById('kline-data');
candleBlocks.forEach(block => {
  block.rows.forEach((row, n) => drawCandle(klineGroup, block.start + n, block.base, row));
});
klineLines.forEach(line => drawLine(klineGroup, line));

const volGroup = document.getElementById('volume-data');
volTops.forEach((z, i) => {
  const x = xAt(i);
  const top = 1740 + z / 3;
  if (volColors[i] === 'r') {
    add(volGroup, 'rect', { x: x - 4.5, y: top, width: 9, height: 2044 - top - 1, fill: '#fff', stroke: RED, 'stroke-width': 2.8 });
  } else {
    add(volGroup, 'rect', { x: x - 5.5, y: top, width: 11, height: 2044 - top, fill: GREEN });
  }
});
volLines.forEach(line => drawLine(volGroup, line));

const ticks = document.getElementById('ticks');
for (let i = 15; i <= 98; i++) {
  const major = i === 30 || i === 64 || i === 98;
  add(ticks, 'line', {
    x1: xAt(i), x2: xAt(i), y1: 2047, y2: major ? 2063 : 2057,
    stroke: major ? '#777' : '#999', 'stroke-width': major ? 3 : 1.5,
    opacity: i < 20 ? (i - 14) / 6 : 1
  });
}
```
